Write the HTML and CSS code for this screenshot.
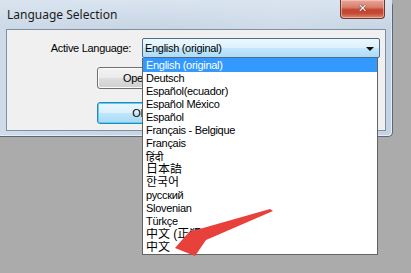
FILE: index.html
```html
<!DOCTYPE html>
<html>
<head>
<meta charset="utf-8">
<link rel="stylesheet" href="styles.css">
</head>
<body>
<div class="window">
  <div class="titlebar">
    <span class="title">Language Selection</span>
    <div class="close"><span class="x">✕</span></div>
  </div>
  <div class="client">
    <div class="row">
      <label class="label">Active Language:</label>
      <div class="combo">
        <span class="combo-text">English (original)</span>
        <span class="caret"></span>
      </div>
    </div>
    <div class="buttons">
      <div class="btn">Open...</div>
      <div class="btn btn-default">OK</div>
    </div>
  </div>
</div>

<ul class="list">
  <li class="item selected">English (original)</li>
  <li class="item">Deutsch</li>
  <li class="item">Español(ecuador)</li>
  <li class="item">Español México</li>
  <li class="item">Español</li>
  <li class="item">Français - Belgique</li>
  <li class="item">Français</li>
  <li class="item hi">हिंदी</li>
  <li class="item cjk">日本語</li>
  <li class="item cjk">한국어</li>
  <li class="item">русский</li>
  <li class="item">Slovenian</li>
  <li class="item">Türkçe</li>
  <li class="item cjk">中文 (正體)</li>
  <li class="item cjk">中文</li>
</ul>

<svg class="annot" width="411" height="273" viewBox="0 0 411 273">
  <polygon points="270,209 273,211 206,240 195,256 175,248 189,232" fill="#e8403a"/>
</svg>
</body>
</html>
```

FILE: styles.css
```css
html, body {
  margin: 0;
  padding: 0;
}
body {
  width: 411px;
  height: 273px;
  background: #ababab;
  position: relative;
  overflow: hidden;
  font-family: "Liberation Sans", Arial, sans-serif;
  font-size: 11px;
  letter-spacing: -0.3px;
  color: #000;
}
.window {
  width: 392px;
  height: 136px;
  border-right: 1px solid #5a6878;
  border-bottom: 1px solid #5a6878;
  border-radius: 0 6px 5px 0;
  background: linear-gradient(to right, #cfdbe8 0%, #c6d4e3 40%, #d3dee9 70%, #c4d3e2 100%);
  box-shadow: inset -1px -1px 0 #e6edf4;
  display: flex;
  flex-direction: column;
}
.titlebar {
  height: 29px;
  position: relative;
  display: flex;
  align-items: center;
  padding-left: 7px;
  background: linear-gradient(#d9e4ef, rgba(200, 214, 229, 0.4));
}
.title {
  font-family: "Noto Sans", "Open Sans", sans-serif;
  font-size: 12px;
  letter-spacing: 0;
  color: #1b1b1b;
  margin-top: -1px;
}
.close {
  position: absolute;
  left: 340px;
  top: 0;
  width: 43px;
  height: 18px;
  border: 1px solid #6d3a33;
  border-top: none;
  border-radius: 0 0 4px 4px;
  background: linear-gradient(#e9a799 0%, #d88070 40%, #c3432e 55%, #c74a35 75%, #dd8a73 100%);
  box-shadow: inset 0 0 0 1px rgba(255, 220, 210, 0.5);
  display: flex;
  align-items: center;
  justify-content: center;
}
.x {
  color: #fff;
  font-family: "DejaVu Sans", sans-serif;
  font-size: 11px;
  font-weight: bold;
  letter-spacing: 0;
  text-shadow: 0 0 1px #5a1a10, 0 0 1px #5a1a10;
  margin-top: -1px;
}
.client {
  margin: 0 6px 5px 6px;
  flex: 1;
  border: 1px solid #7f90a3;
  background: #f0f0f0;
  padding-top: 8px;
  display: flex;
  flex-direction: column;
}
.row {
  display: flex;
  align-items: center;
  gap: 11px;
}
.label {
  width: 124px;
  text-align: right;
}
.combo {
  width: 234px;
  height: 18px;
  border: 1px solid #4f6b86;
  border-radius: 2px;
  background: linear-gradient(#edf7fd 0%, #ddf1fc 48%, #c3e7fb 52%, #acdcf8 100%);
  display: flex;
  align-items: center;
  padding-left: 2px;
  position: relative;
}
.caret {
  position: absolute;
  right: 5px;
  top: 8px;
  width: 0;
  height: 0;
  border-left: 4px solid transparent;
  border-right: 4px solid transparent;
  border-top: 4px solid #111;
}
.buttons {
  margin-left: 90px;
  margin-top: 9px;
  display: flex;
  flex-direction: column;
  gap: 13px;
}
.btn {
  width: 84px;
  height: 20px;
  border: 1px solid #707070;
  border-radius: 3px;
  background: linear-gradient(#f3f3f3 0%, #ebebeb 48%, #dddddd 52%, #cfcfcf 100%);
  box-shadow: inset 0 0 0 1px #fbfbfb;
  display: flex;
  align-items: center;
  justify-content: center;
}
.btn-default {
  border-color: #3c7fb1;
  background: linear-gradient(#eaf6fd 0%, #d9f0fc 48%, #bee6fd 52%, #a7d9f5 100%);
  box-shadow: inset 0 0 0 1px #48d7fb;
}
.list {
  position: absolute;
  left: 142px;
  top: 58px;
  width: 234px;
  height: 196px;
  margin: 0;
  padding: 0;
  list-style: none;
  background: #fff;
  border: 1px solid #646464;
  border-top: none;
}
.item {
  height: 13px;
  line-height: 13px;
  padding-left: 3px;
  white-space: nowrap;
  overflow: hidden;
}
.item:first-child {
  height: 14px;
  line-height: 14px;
}
.selected {
  background: #3399ff;
  color: #fff;
}
.cjk {
  font-family: "Liberation Sans", "Noto Sans CJK SC", "Noto Sans CJK KR", sans-serif;
  font-size: 12px;
  letter-spacing: 0;
}
.hi {
  font-family: "Noto Sans", "DejaVu Sans", sans-serif;
  letter-spacing: 0;
}
.annot {
  position: absolute;
  left: 0;
  top: 0;
  pointer-events: none;
}
```
